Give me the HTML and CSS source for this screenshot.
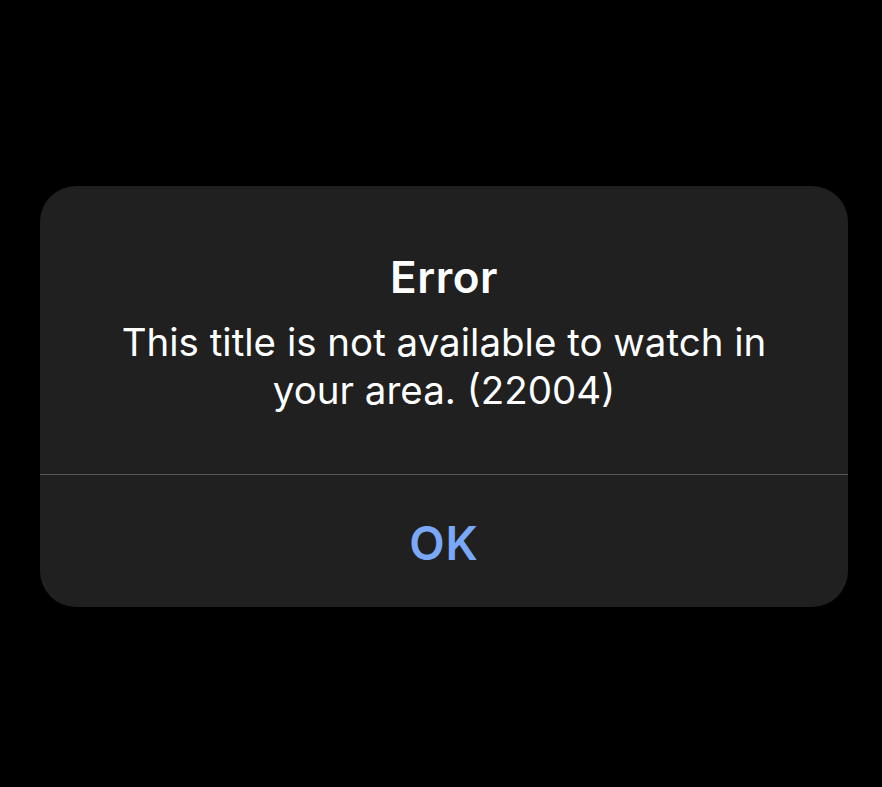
FILE: index.html
```html
<!DOCTYPE html>
<html lang="en">
<head>
<meta charset="utf-8">
<title>Error</title>
<link rel="stylesheet" href="styles.css">
</head>
<body>
<div class="alert" role="alertdialog" aria-labelledby="alert-title">
  <div class="alert-body">
    <h1 class="alert-title" id="alert-title">Error</h1>
    <p class="alert-message">This title is not available to watch in your area. (22004)</p>
  </div>
  <button class="alert-action" type="button">OK</button>
</div>
</body>
</html>
```

FILE: styles.css
```css
html, body {
  margin: 0;
  background: #000;
}

body {
  width: 882px;
  height: 787px;
  padding-top: 186px;
  box-sizing: border-box;
  font-family: Inter, "Noto Sans", "DejaVu Sans", sans-serif;
}

.alert {
  width: 808px;
  margin-left: 40px;
  background: #202020;
  border-radius: 36px;
  display: flex;
  flex-direction: column;
  overflow: hidden;
}

.alert-body {
  padding: 65px 60px 60px;
  display: flex;
  flex-direction: column;
  align-items: center;
  gap: 15px;
  text-align: center;
  border-bottom: 1px solid #595959;
}

.alert-title {
  margin: 0;
  font-size: 44px;
  line-height: 52px;
  font-weight: 600;
  letter-spacing: 0.5px;
  color: #fff;
}

.alert-message {
  margin: 0;
  font-size: 38.5px;
  line-height: 48px;
  font-weight: 400;
  color: #fff;
}

.alert-action {
  height: 132px;
  box-sizing: border-box;
  padding: 4px 0 0;
  border: 0;
  background: transparent;
  font-family: inherit;
  font-size: 46px;
  font-weight: 600;
  letter-spacing: 0.8px;
  color: #7ba8f6;
  display: flex;
  align-items: center;
  justify-content: center;
}
```
